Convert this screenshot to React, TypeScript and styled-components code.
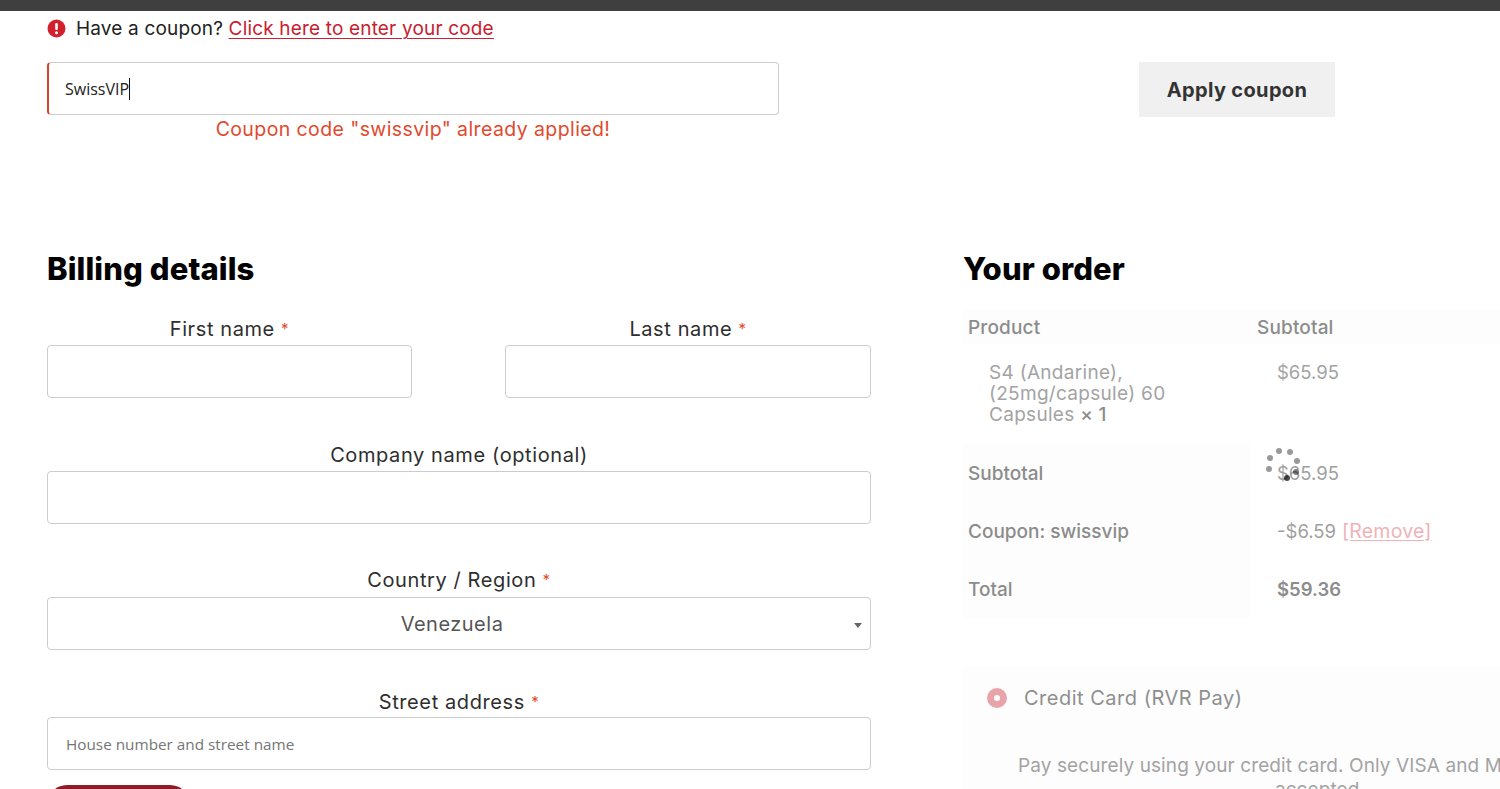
import React from "react";
import styled, { createGlobalStyle } from "styled-components";

const Global = createGlobalStyle`
  html, body { margin: 0; padding: 0; background: #fff; overflow: hidden; height: 789px; }
  body { font-family: Inter, "Liberation Sans", sans-serif; color: #333; }
  * { box-sizing: border-box; }
`;

const Shell = styled.div`
  width: 1500px;
  height: 789px;
  overflow: hidden;
`;
const TopBar = styled.div`
  height: 11px;
  background: #3f3f3f;
`;
const Page = styled.main`
  padding-left: 47px;
  width: 1620px;
`;
const Notice = styled.div`
  height: 35px;
  display: flex;
  align-items: center;
  gap: 10px;
  font-size: 19px;
  letter-spacing: 0.17px;
  color: #222;
`;
const NoticeLink = styled.a`
  color: #c8202f;
  text-decoration: underline;
  text-underline-offset: 3px;
  text-decoration-thickness: 1px;
`;
const CouponRow = styled.div`
  margin-top: 16px;
  display: flex;
  align-items: flex-start;
`;
const CouponColumn = styled.div`
  width: 732px;
`;
const CouponField = styled.div`
  height: 53px;
  display: flex;
  align-items: center;
  padding-left: 16px;
  border: 1px solid #cccccc;
  border-left: 2px solid #d8432d;
  border-radius: 4px;
  font-family: "Open Sans", sans-serif;
  font-size: 16px;
  color: #222;
`;
const Caret = styled.span`
  display: inline-block;
  width: 1px;
  height: 22px;
  background: #111;
`;
const CouponError = styled.div`
  margin-top: 1px;
  text-align: center;
  font-size: 19.5px;
  letter-spacing: 0.4px;
  line-height: 26px;
  color: #e2492d;
`;
const ApplyButton = styled.button`
  margin-left: 360px;
  width: 196px;
  height: 55px;
  border: 0;
  background: #f0f0f0;
  color: #333;
  font-family: Inter, sans-serif;
  font-size: 20px;
  font-weight: 700;
  letter-spacing: 0.35px;
`;
const Columns = styled.div`
  margin-top: 109px;
  display: grid;
  grid-template-columns: 824px 650px;
  column-gap: 92px;
`;
const Heading = styled.h2`
  margin: 0;
  height: 36px;
  line-height: 36px;
  font-size: 31px;
  font-weight: 800;
  letter-spacing: 0.1px;
  color: #000;
`;
const NameRow = styled.div`
  margin-top: 30px;
  display: grid;
  grid-template-columns: 365px 366px;
  column-gap: 93px;
`;
const Field = styled.div<{ $top?: number }>`
  margin-top: ${(p) => p.$top ?? 0}px;
`;
const Label = styled.label<{ $gap: number }>`
  display: block;
  height: 24px;
  margin-bottom: ${(p) => p.$gap}px;
  text-align: center;
  font-size: 20px;
  letter-spacing: 0.6px;
  line-height: 24px;
  color: #2e2e2e;
`;
const Req = styled.span`
  color: #e2492d;
  font-size: 15px;
  vertical-align: 2px;
`;
const TextInput = styled.input`
  display: block;
  width: 100%;
  height: 53px;
  padding: 0 18px;
  border: 1px solid #cccccc;
  border-radius: 4px;
  background: #fff;
  font-family: "Open Sans", sans-serif;
  font-size: 15.3px;
  outline: 0;
  &::placeholder { color: #757575; opacity: 1; }
`;
const SelectBox = styled.div`
  position: relative;
  height: 53px;
  display: flex;
  align-items: center;
  justify-content: center;
  padding-right: 14px;
  border: 1px solid #cccccc;
  border-radius: 4px;
  font-size: 20px;
  letter-spacing: 0.5px;
  color: #555;
`;
const SelectArrow = styled.span`
  position: absolute;
  right: 8px;
  top: 25px;
  border-left: 4px solid transparent;
  border-right: 4px solid transparent;
  border-top: 5px solid #666;
`;
const RedButton = styled.div`
  margin-top: 15px;
  width: 143px;
  height: 40px;
  border-radius: 20px;
  background: #8e1c27;
`;
const OrderColumn = styled.section`
  position: relative;
`;
const OrderTable = styled.div`
  margin-top: 23px;
  display: grid;
  grid-template-columns: 288px 362px;
  color: #8c8c8c;
  font-size: 19px;
`;
const HeadCell = styled.div<{ $first?: boolean }>`
  height: 34px;
  padding-left: ${(p) => (p.$first ? "5px" : "6px")};
  display: flex;
  align-items: center;
  font-weight: 500;
  letter-spacing: 0.15px;
  background: #fdfdfd;
`;
const ProductCell = styled.div`
  height: 100px;
  padding: 18px 60px 0 26px;
  line-height: 21px;
  font-size: 19px;
  letter-spacing: 0.3px;
  color: #a3a3a3;
`;
const Qty = styled.strong`
  color: #8c8c8c;
  font-weight: 500;
`;
const PriceCell = styled.div`
  height: 100px;
  padding: 18px 0 0 26px;
  line-height: 21px;
  font-size: 18.5px;
  color: #a3a3a3;
`;
const FootLabel = styled.div`
  height: 58px;
  padding-left: 5px;
  display: flex;
  align-items: center;
  font-weight: 500;
  background: #fdfdfd;
`;
const FootValue = styled.div<{ $strong?: boolean }>`
  height: 58px;
  padding-left: 26px;
  display: flex;
  align-items: center;
  gap: 6px;
  font-size: 18.5px;
  font-weight: ${(p) => (p.$strong ? 600 : 400)};
  color: ${(p) => (p.$strong ? "#8c8c8c" : "#a0a0a0")};
`;
const RemoveLink = styled.a`
  font-size: 19.5px;
  letter-spacing: 0.2px;
  color: #eeb3b8;
  text-decoration: underline;
  text-underline-offset: 2px;
`;
const Spinner = styled.svg`
  position: absolute;
  left: 300px;
  top: 195px;
  width: 40px;
  height: 40px;
`;
const PaymentBox = styled.div`
  margin-top: 48px;
  height: 140px;
  background: #fdfdfd;
  padding-left: 24px;
`;
const PaymentHead = styled.div`
  height: 64px;
  display: flex;
  align-items: center;
  gap: 17px;
  font-size: 20px;
  letter-spacing: 0.5px;
  color: #8f8f8f;
`;
const Radio = styled.span`
  width: 20px;
  height: 20px;
  border-radius: 50%;
  border: 7px solid #e9a4aa;
  background: #fff;
`;
const PaymentText = styled.p`
  margin: 24px 0 0 27px;
  width: 612px;
  text-align: center;
  font-size: 19px;
  letter-spacing: 0.1px;
  line-height: 24px;
  color: #a3a3a3;
`;

const dots = [
  [16, 5, 0.4], [27, 6, 0.4], [34, 15, 0.4], [33, 26, 0.5],
  [24, 32, 0.7], [7, 12, 0.4], [6, 23, 0.4],
];

export default function App() {
  return (
    <Shell>
      <Global />
      <TopBar />
      <Page>
        <Notice>
          <svg width="19" height="19" viewBox="0 0 19 19" aria-hidden="true">
            <circle cx="9.5" cy="9.5" r="9" fill="#d3202e" />
            <rect x="8.2" y="4" width="2.6" height="7" rx="1.2" fill="#fff" />
            <circle cx="9.5" cy="13.8" r="1.5" fill="#fff" />
          </svg>
          <span>
            Have a coupon? <NoticeLink>Click here to enter your code</NoticeLink>
          </span>
        </Notice>
        <CouponRow>
          <CouponColumn>
            <CouponField>
              SwissVIP
              <Caret />
            </CouponField>
            <CouponError>Coupon code "swissvip" already applied!</CouponError>
          </CouponColumn>
          <ApplyButton>Apply coupon</ApplyButton>
        </CouponRow>
        <Columns>
          <section>
            <Heading>Billing details</Heading>
            <NameRow>
              <Field>
                <Label $gap={4}>First name <Req>*</Req></Label>
                <TextInput />
              </Field>
              <Field>
                <Label $gap={4}>Last name <Req>*</Req></Label>
                <TextInput />
              </Field>
            </NameRow>
            <Field $top={45}>
              <Label $gap={4}>Company name (optional)</Label>
              <TextInput />
            </Field>
            <Field $top={44}>
              <Label $gap={5}>Country / Region <Req>*</Req></Label>
              <SelectBox>
                Venezuela
                <SelectArrow />
              </SelectBox>
            </Field>
            <Field $top={40}>
              <Label $gap={3}>Street address <Req>*</Req></Label>
              <TextInput placeholder="House number and street name" />
            </Field>
            <RedButton />
          </section>
          <OrderColumn>
            <Heading>Your order</Heading>
            <OrderTable>
              <HeadCell $first>Product</HeadCell>
              <HeadCell>Subtotal</HeadCell>
              <ProductCell>
                S4 (Andarine), (25mg/capsule) 60 Capsules <Qty>× 1</Qty>
              </ProductCell>
              <PriceCell>$65.95</PriceCell>
              <FootLabel>Subtotal</FootLabel>
              <FootValue>$65.95</FootValue>
              <FootLabel>Coupon: swissvip</FootLabel>
              <FootValue>
                -$6.59 <RemoveLink>[Remove]</RemoveLink>
              </FootValue>
              <FootLabel>Total</FootLabel>
              <FootValue $strong>$59.36</FootValue>
            </OrderTable>
            <Spinner viewBox="0 0 40 40" aria-hidden="true">
              {dots.map(([x, y, o]) => (
                <circle key={`${x}-${y}`} cx={x} cy={y} r="3" fill="#000" opacity={o} />
              ))}
            </Spinner>
            <PaymentBox>
              <PaymentHead>
                <Radio />
                Credit Card (RVR Pay)
              </PaymentHead>
              <PaymentText>
                Pay securely using your credit card. Only VISA and Mastercard are accepted.
              </PaymentText>
            </PaymentBox>
          </OrderColumn>
        </Columns>
      </Page>
    </Shell>
  );
}
